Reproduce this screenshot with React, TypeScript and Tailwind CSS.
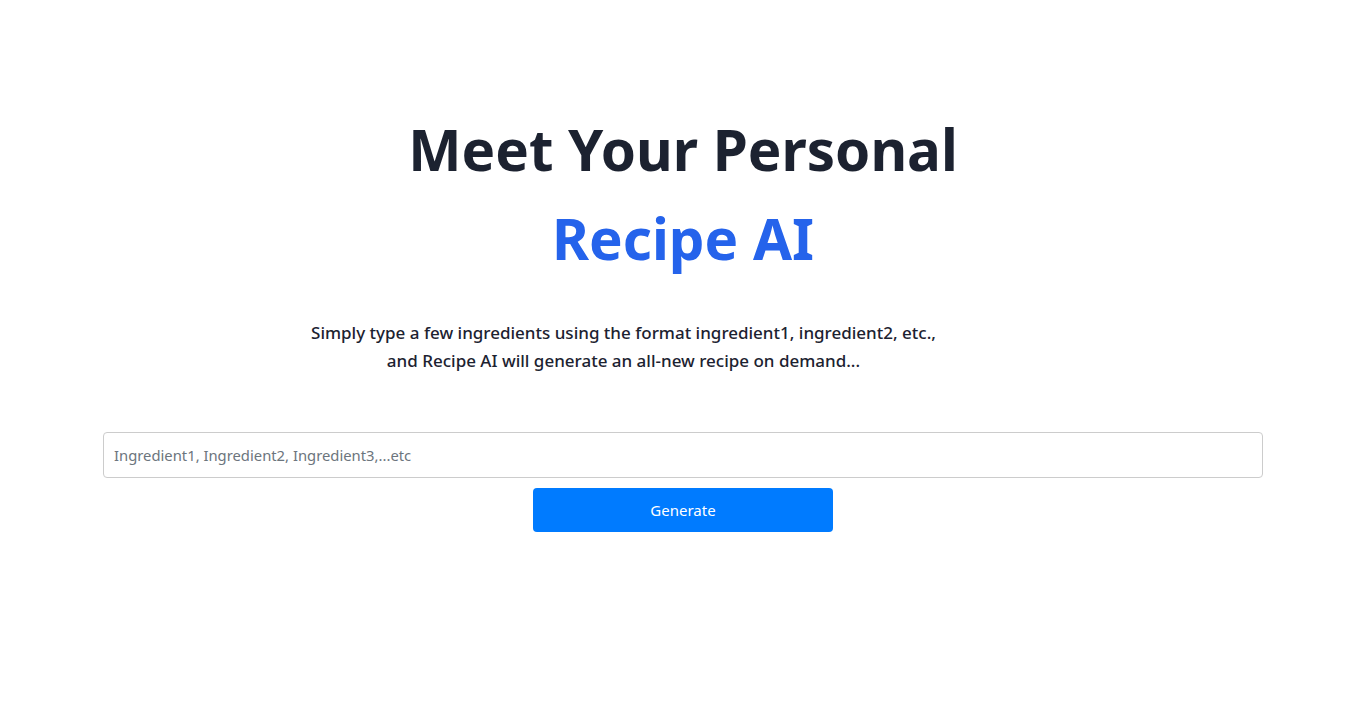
import React from "react";

export default function App() {
  return (
    <div className="min-h-screen bg-white" style={{ fontFamily: '"Noto Sans", "Open Sans", sans-serif' }}>
      <div className="flex flex-col items-center pt-[105px]">
        <h1 className="text-[56.5px] leading-[89px] font-bold text-[#1c2230]">Meet Your Personal</h1>
        <h2 className="text-[56.5px] leading-[89px] font-bold text-[#2563eb]">Recipe AI</h2>
        <p className="mt-[36px] mr-[119px] text-[17px] leading-[28px] font-medium text-[#1c2230] text-center">
          Simply type a few ingredients using the format ingredient1, ingredient2, etc.,
          <br />
          and Recipe AI will generate an all-new recipe on demand...
        </p>
        <div className="mt-[57px] w-[1160px] flex flex-col items-center gap-[10px]">
          <input
            type="text"
            placeholder="Ingredient1, Ingredient2, Ingredient3,...etc"
            className="w-full h-[46px] px-[10px] border border-[#cccccc] rounded-[4px] text-[14.8px] text-[#495057] placeholder:text-[#6c757d] outline-none"
          />
          <button className="w-[300px] h-[44px] bg-[#007bff] rounded-[4px] text-white text-[15px]">Generate</button>
        </div>
      </div>
    </div>
  );
}
